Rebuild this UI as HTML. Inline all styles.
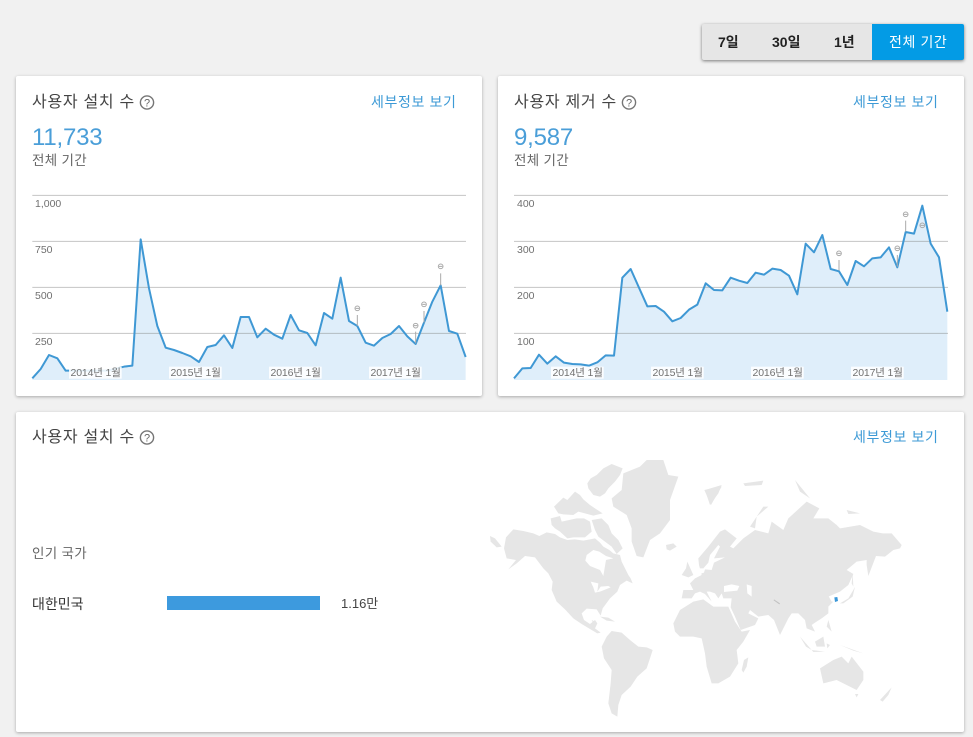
<!DOCTYPE html>
<html lang="ko"><head><meta charset="utf-8"><title>통계</title>
<style>
html,body{margin:0;padding:0}
body{width:973px;height:737px;overflow:hidden;background:#f1f1f1;position:relative;font-family:"Liberation Sans","Noto Sans CJK KR",sans-serif;color:#333}
.card{position:absolute;background:#fff;border-radius:2px;box-shadow:0 1px 3px rgba(0,0,0,.3)}
.t{position:absolute;white-space:nowrap;line-height:20px}
.title{font-size:16px;letter-spacing:.72px;color:#444}
.link{font-size:14px;letter-spacing:.62px;color:#3d9ad6}
.num{font-size:24px;letter-spacing:-.2px;color:#4a9ed8;line-height:28px}
.sub{font-size:13.5px;letter-spacing:.3px;color:#666}
.btns{position:absolute;left:702px;top:24px;width:262px;height:36px;background:#e6e6e6;border-radius:2px;box-shadow:0 1px 3px rgba(0,0,0,.5);overflow:hidden}
.btns span{position:absolute;top:8px;line-height:20px;font-size:14px;font-weight:bold;color:#222;white-space:nowrap}
.btns i{position:absolute;left:170px;top:0;width:92px;height:36px;background:#039be5}
.btns .on{font-weight:normal;color:#fff;left:187px;letter-spacing:.6px}
svg{position:absolute;left:0;top:0}
text{font-family:"Liberation Sans","Noto Sans CJK KR",sans-serif}
.q{fill:none;stroke:#757575;stroke-width:1.4}
</style></head>
<body>
<div class="btns"><i></i><span style="left:16px">7일</span><span style="left:70px">30일</span><span style="left:132px">1년</span><span class="on">전체 기간</span></div>
<div class="card" style="left:16px;top:76px;width:466px;height:320px"></div>
<div class="card" style="left:498px;top:76px;width:466px;height:320px"></div>
<div class="card" style="left:16px;top:412px;width:948px;height:320px"></div>

<div class="t title" style="left:32px;top:93px">사용자 설치 수</div>
<div class="t title" style="left:514px;top:93px">사용자 제거 수</div>
<div class="t title" style="left:32px;top:428px">사용자 설치 수</div>
<div class="t link" style="left:371px;top:92px">세부정보 보기</div>
<div class="t link" style="left:853px;top:92px">세부정보 보기</div>
<div class="t link" style="left:853px;top:427px">세부정보 보기</div>
<div class="t num" style="left:32px;top:124px">11,733</div>
<div class="t num" style="left:514px;top:124px">9,587</div>
<div class="t sub" style="left:32px;top:151px">전체 기간</div>
<div class="t sub" style="left:514px;top:151px">전체 기간</div>
<div class="t sub" style="left:32px;top:544px">인기 국가</div>
<div class="t" style="left:32px;top:594px;font-size:14px;color:#333">대한민국</div>
<div class="t" style="left:341px;top:594px;font-size:13px;color:#444">1.16만</div>
<div style="position:absolute;left:167px;top:596px;width:153px;height:14px;background:#3d9ade"></div>

<svg width="973" height="737" viewBox="0 0 973 737">
<defs><filter id="b" x="-5%" y="-5%" width="110%" height="110%"><feGaussianBlur stdDeviation=".35"/></filter></defs>
<!-- help icons -->
<circle class="q" cx="147" cy="102.500" r="6.600"/><text x="147" y="106.500" font-size="11" fill="#666" text-anchor="middle">?</text>
<circle class="q" cx="629" cy="102.500" r="6.600"/><text x="629" y="106.500" font-size="11" fill="#666" text-anchor="middle">?</text>
<circle class="q" cx="147" cy="437.500" r="6.600"/><text x="147" y="441.500" font-size="11" fill="#666" text-anchor="middle">?</text>

<!-- left chart -->
<g transform="translate(0,180) scale(.33333)">
<path fill="#dfeefa" d="M97,595 122,567 147,525 172,535 197,572 222,572 247,572 272,572 297,572 322,572 347,566 372,560 397,557 422,178 447,325 472,438 497,503 522,510 547,519 572,529 597,546 622,501 647,495 672,466 697,504 722,411 747,411 772,472 797,446 822,464 847,476 872,405 897,451 922,459 947,496 972,399 997,416 1022,293 1047,423 1072,438 1097,488 1122,497 1147,474 1172,462 1197,438 1222,469 1247,492 1272,428 1297,365 1322,316 1347,453 1372,461 1397,531 1397,600 97,600Z"/>
<g stroke="#7c7c7c" stroke-opacity=".45" stroke-width="3"><path d="M97,46H1398M97,184H1398M97,322H1398M97,460H1398"/></g>
<path fill="none" stroke="#3f98d4" stroke-width="6" stroke-linejoin="round" d="M97,595 122,567 147,525 172,535 197,572 222,572 247,572 272,572 297,572 322,572 347,566 372,560 397,557 422,178 447,325 472,438 497,503 522,510 547,519 572,529 597,546 622,501 647,495 672,466 697,504 722,411 747,411 772,472 797,446 822,464 847,476 872,405 897,451 922,459 947,496 972,399 997,416 1022,293 1047,423 1072,438 1097,488 1122,497 1147,474 1172,462 1197,438 1222,469 1247,492 1272,428 1297,365 1322,316 1347,453 1372,461 1397,531"/>
<g fill="#fff" fill-opacity=".88"><rect x="207" y="560" width="158" height="36"/><rect x="507" y="560" width="158" height="36"/><rect x="807" y="560" width="158" height="36"/><rect x="1107" y="560" width="158" height="36"/></g>
<g stroke="#aaa" stroke-width="3"><path d="M1072,405V438M1247,455V490M1272,393V428M1322,280V316"/></g>
<g fill="none" stroke="#aaa" stroke-width="3"><circle cx="1072" cy="385" r="7"/><circle cx="1247" cy="437" r="7"/><circle cx="1272" cy="373" r="7"/><circle cx="1322" cy="259" r="7"/><path d="M1067,385h10M1242,437h10M1267,373h10M1317,259h10"/></g>
</g>
<g font-size="10.500" fill="#707070">
<text x="35" y="207">1,000</text><text x="35" y="253">750</text><text x="35" y="299">500</text><text x="35" y="345">250</text>
<text x="70.500" y="376" letter-spacing="-.15">2014년 1월</text><text x="170.500" y="376" letter-spacing="-.15">2015년 1월</text><text x="270.500" y="376" letter-spacing="-.15">2016년 1월</text><text x="370.500" y="376" letter-spacing="-.15">2017년 1월</text>
</g>

<!-- right chart -->
<g transform="translate(490,180) scale(.33333)">
<path fill="#dfeefa" d="M72,595 97,565 122,564 147,524 172,551 197,529 222,548 247,552 272,553 297,557 322,547 347,526 372,527 397,293 422,267 447,323 472,379 497,378 522,395 547,424 572,414 597,389 622,374 647,310 672,330 697,331 722,293 747,302 772,309 797,278 822,284 847,266 872,270 897,287 922,343 947,191 972,217 997,165 1022,267 1047,274 1072,315 1097,243 1122,259 1147,235 1172,232 1197,202 1222,262 1247,156 1272,161 1297,77 1322,191 1347,232 1372,395 1372,600 72,600Z"/>
<g stroke="#7c7c7c" stroke-opacity=".45" stroke-width="3"><path d="M72,46H1374M72,184H1374M72,322H1374M72,460H1374"/></g>
<path fill="none" stroke="#3f98d4" stroke-width="6" stroke-linejoin="round" d="M72,595 97,565 122,564 147,524 172,551 197,529 222,548 247,552 272,553 297,557 322,547 347,526 372,527 397,293 422,267 447,323 472,379 497,378 522,395 547,424 572,414 597,389 622,374 647,310 672,330 697,331 722,293 747,302 772,309 797,278 822,284 847,266 872,270 897,287 922,343 947,191 972,217 997,165 1022,267 1047,274 1072,315 1097,243 1122,259 1147,235 1172,232 1197,202 1222,262 1247,156 1272,161 1297,77 1322,191 1347,232 1372,395"/>
<g fill="#fff" fill-opacity=".88"><rect x="183" y="560" width="158" height="36"/><rect x="483" y="560" width="158" height="36"/><rect x="783" y="560" width="158" height="36"/><rect x="1083" y="560" width="158" height="36"/></g>
<g stroke="#aaa" stroke-width="3"><path d="M1047,240V272M1222,225V260M1247,122V155"/></g>
<g fill="none" stroke="#aaa" stroke-width="3"><circle cx="1047" cy="220" r="7"/><circle cx="1222" cy="205" r="7"/><circle cx="1247" cy="103" r="7"/><circle cx="1297" cy="136" r="7"/><path d="M1042,220h10M1217,205h10M1242,103h10M1292,136h10"/></g>
</g>
<g font-size="10.500" fill="#707070">
<text x="517" y="207">400</text><text x="517" y="253">300</text><text x="517" y="299">200</text><text x="517" y="345">100</text>
<text x="552.500" y="376" letter-spacing="-.15">2014년 1월</text><text x="652.500" y="376" letter-spacing="-.15">2015년 1월</text><text x="752.500" y="376" letter-spacing="-.15">2016년 1월</text><text x="852.500" y="376" letter-spacing="-.15">2017년 1월</text>
</g>

<g filter="url(#b)">
<!-- world map: Americas / Greenland -->
<g transform="translate(480,450) scale(.33333)" fill="#e6e6e6">
<path d="M72,295 78,262 100,238 130,243 160,250 178,258 200,247 225,252 240,262 262,270 285,268 310,272 330,268 345,265 360,278 370,290 388,300 400,310 420,315 425,335 445,375 452,385 458,400 440,392 420,405 412,425 390,445 368,475 362,497 350,478 320,476 305,490 312,510 330,522 345,510 352,520 345,535 362,548 352,550 335,540 305,522 280,505 255,478 230,455 215,420 218,395 205,370 190,355 165,322 135,318 110,340 85,358 108,330 80,325Z"/>
<path fill="#fff" d="M320,315 340,300 358,305 378,318 400,325 378,330 370,378 360,360 330,348 316,332Z"/>
<path fill="#fff" d="M332,395 355,400 352,425 362,410 385,408 392,412 360,425 345,428 340,412Z"/>
<path d="M212,205 240,198 245,215 290,205 312,205 330,215 335,245 315,262 280,262 262,265 240,245 225,235 215,225Z"/>
<path d="M222,170 250,143 262,150 285,125 300,135 310,148 330,165 345,175 368,190 340,197 315,190 295,185 280,195 250,193 235,190Z"/>
<path d="M322,100 332,85 350,75 370,55 395,42 428,55 420,75 405,95 385,115 375,130 360,140 340,135 325,115Z"/>
<path d="M335,210 365,205 385,225 395,250 415,270 428,295 410,312 395,290 375,275 355,260 345,240Z"/>
<path d="M30,258 45,265 65,290 50,292 32,275Z"/>
<path d="M395,145 425,120 430,70 480,50 500,30 550,30 565,75 595,80 570,150 570,210 540,250 510,270 490,322 470,318 455,275 455,235 440,195 400,170Z"/>
<path d="M558,285 580,280 590,290 570,302 560,298Z"/>
<path d="M365,590 380,560 395,543 425,548 450,570 475,590 500,592 518,600 510,625 500,655 472,680 452,710 425,735 415,765 412,800 395,790 385,760 392,700 395,660 372,625Z"/>
<path d="M605,375 618,355 622,335 640,375 625,382Z"/>
<path d="M360,500 385,503 405,515 380,512ZM335,510 345,515 340,520Z"/>
<path d="M675,120 725,105 715,130 690,165Z"/>
</g>
<!-- Eurasia / Africa / Oceania -->
<g transform="translate(700,450) scale(.33333)" fill="#e6e6e6">
<path d="M-80,520 -60,480 -20,455 10,448 40,470 85,470 105,515 125,545 150,540 130,575 110,600 115,640 90,680 55,700 35,700 20,650 15,610 5,565 -20,560 -60,560 -75,545Z"/>
<path d="M-55,445 -50,420 -20,420 -30,400 -15,385 5,375 -3,345 -5,325 25,290 60,245 75,238 110,265 90,290 100,295 130,265 165,240 205,250 215,215 250,240 265,205 320,155 358,175 340,205 385,205 410,225 420,235 480,225 520,245 548,250 575,250 605,285 600,295 580,300 555,320 528,318 505,378 500,345 500,330 470,335 440,360 460,372 445,405 420,425 385,440 382,432 395,455 400,455 385,470 385,490 365,505 345,518 335,525 345,545 320,535 315,510 295,490 275,490 265,505 240,555 222,510 205,495 175,500 150,480 145,490 175,505 165,525 122,540 105,500 92,472 95,445 70,445 65,430 55,445 45,430 30,425 20,425 35,455 15,432 0,425 -15,430 -25,445Z"/>
<path fill="#fff" d="M72,408 95,403 118,408 112,422 72,426ZM140,403 155,408 155,440 142,430ZM-10,355 10,355 25,338 30,315 55,285 60,290 42,325 75,322 42,338 35,360 15,358 12,368 -10,375Z"/>
<path d="M150,230 190,170 205,170 170,200 165,235Z"/>
<path d="M13,120 65,110 50,135 33,165Z"/>
<path d="M130,100 190,92 185,105 135,108ZM285,90 330,145 300,125ZM440,180 480,190 445,192Z"/>
<path d="M360,655 400,630 425,620 445,640 455,620 490,665 490,690 470,720 440,705 410,690 370,700Z"/>
<path d="M540,750 575,712 565,735 548,755ZM465,732 475,732 470,742Z"/>
<path d="M125,660 132,630 145,622 140,650 130,668Z"/>
<path d="M420,460 445,445 460,420 465,410 458,440 430,460ZM458,370 460,410 455,400Z"/>
<path d="M300,560 335,600 318,590ZM345,575 370,560 375,590 350,590ZM335,600 375,605 340,606ZM420,585 490,610 460,602ZM385,510 395,545 380,530ZM380,580 390,585 382,595Z"/>
<path fill="#3b97d8" d="M403,442 412,441 414,453 405,456Z"/>
<path fill="#aaa" d="M222,448 240,460 238,463 221,451Z" fill-opacity=".6"/>
</g>
</g>
</svg>
</body></html>
